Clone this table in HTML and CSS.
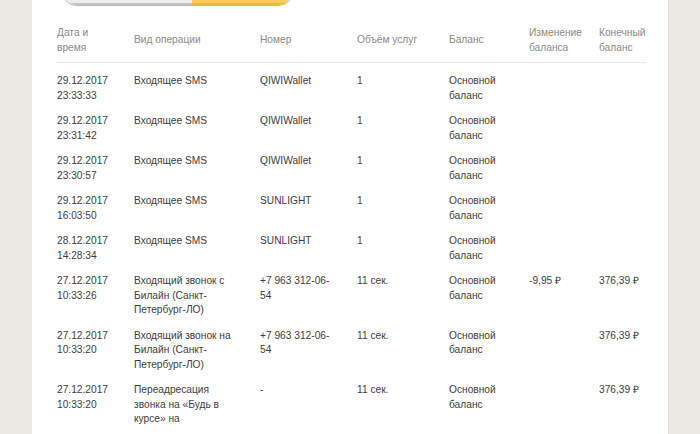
FILE: index.html
```html
<!DOCTYPE html>
<html lang="ru">
<head>
  <meta charset="UTF-8">
  <meta name="viewport" content="width=device-width, initial-scale=1.0">
  <title>Детализация</title>
  <link rel="stylesheet" href="styles.css">
</head>
<body>
  <div class="page">
    <div class="panel">
      <div class="switch">
        <span class="switch-left"></span>
        <span class="switch-right"></span>
      </div>
      <table class="report">
        <colgroup>
          <col class="c-date">
          <col class="c-type">
          <col class="c-num">
          <col class="c-vol">
          <col class="c-bal">
          <col class="c-chg">
          <col class="c-end">
        </colgroup>
        <thead>
          <tr>
            <th>Дата и время</th>
            <th>Вид операции</th>
            <th>Номер</th>
            <th>Объём услуг</th>
            <th>Баланс</th>
            <th>Изменение баланса</th>
            <th>Конечный баланс</th>
          </tr>
        </thead>
        <tbody>
          <tr>
            <td>29.12.2017 23:33:33</td>
            <td>Входящее SMS</td>
            <td>QIWIWallet</td>
            <td>1</td>
            <td>Основной баланс</td>
            <td></td>
            <td></td>
          </tr>
          <tr>
            <td>29.12.2017 23:31:42</td>
            <td>Входящее SMS</td>
            <td>QIWIWallet</td>
            <td>1</td>
            <td>Основной баланс</td>
            <td></td>
            <td></td>
          </tr>
          <tr>
            <td>29.12.2017 23:30:57</td>
            <td>Входящее SMS</td>
            <td>QIWIWallet</td>
            <td>1</td>
            <td>Основной баланс</td>
            <td></td>
            <td></td>
          </tr>
          <tr>
            <td>29.12.2017 16:03:50</td>
            <td>Входящее SMS</td>
            <td>SUNLIGHT</td>
            <td>1</td>
            <td>Основной баланс</td>
            <td></td>
            <td></td>
          </tr>
          <tr>
            <td>28.12.2017 14:28:34</td>
            <td>Входящее SMS</td>
            <td>SUNLIGHT</td>
            <td>1</td>
            <td>Основной баланс</td>
            <td></td>
            <td></td>
          </tr>
          <tr>
            <td>27.12.2017 10:33:26</td>
            <td>Входящий звонок с Билайн (Санкт-Петербург-ЛО)</td>
            <td>+7 963 312-06-54</td>
            <td>11 сек.</td>
            <td>Основной баланс</td>
            <td>-9,95 ₽</td>
            <td>376,39 ₽</td>
          </tr>
          <tr>
            <td>27.12.2017 10:33:20</td>
            <td>Входящий звонок на Билайн (Санкт-Петербург-ЛО)</td>
            <td>+7 963 312-06-54</td>
            <td>11 сек.</td>
            <td>Основной баланс</td>
            <td></td>
            <td>376,39 ₽</td>
          </tr>
          <tr>
            <td>27.12.2017 10:33:20</td>
            <td>Переадресация звонка на «Будь в курсе» на</td>
            <td>-</td>
            <td>11 сек.</td>
            <td>Основной баланс</td>
            <td></td>
            <td>376,39 ₽</td>
          </tr>
        </tbody>
      </table>
    </div>
  </div>
</body>
</html>
```

FILE: styles.css
```css
body {
  margin: 0;
  background-color: #ece9e5;
  font-family: "Liberation Sans", Arial, sans-serif;
  font-size: 10.2px;
  color: #3d3d3d;
  overflow: hidden;
}
.page {
  height: 434px;
  overflow: hidden;
}
.panel {
  margin-left: 32px;
  width: 637px;
  height: 470px;
  background: #fff;
  border-right: 1px solid #e0ddd8;
  padding-left: 25px;
  box-sizing: border-box;
}
.switch {
  display: flex;
  width: 231px;
  height: 30px;
  margin-left: 5px;
  margin-top: -25px;
  margin-bottom: 21px;
  border-radius: 15px;
  overflow: hidden;
  box-shadow: 0 1px 1px rgba(0, 0, 0, 0.3);
}
.switch-left {
  width: 130px;
  background: linear-gradient(#fafafa, #ececec);
  border-bottom: 2px solid #c4c4c4;
}
.switch-right {
  flex: 1;
  background: #fecb5a;
  border-bottom: 2px solid #f0b444;
}
.report {
  width: 589px;
  table-layout: fixed;
  border-collapse: collapse;
}
.c-date { width: 77px; }
.c-type { width: 126px; }
.c-num { width: 97px; }
.c-vol { width: 92px; }
.c-bal { width: 80px; }
.c-chg { width: 70px; }
.c-end { width: 47px; }
.report th,
.report td {
  padding: 5px 25px 6px 0;
  text-align: left;
  line-height: 14.5px;
}
.report th {
  font-weight: normal;
  color: #8a8a8a;
  vertical-align: middle;
  padding-top: 0;
  padding-bottom: 7px;
  border-bottom: 1px solid #e8e8e8;
}
.report td {
  vertical-align: top;
}
.report th:last-child,
.report td:last-child {
  padding-right: 0;
}
.report tbody tr:first-child td {
  padding-top: 11px;
}
```
